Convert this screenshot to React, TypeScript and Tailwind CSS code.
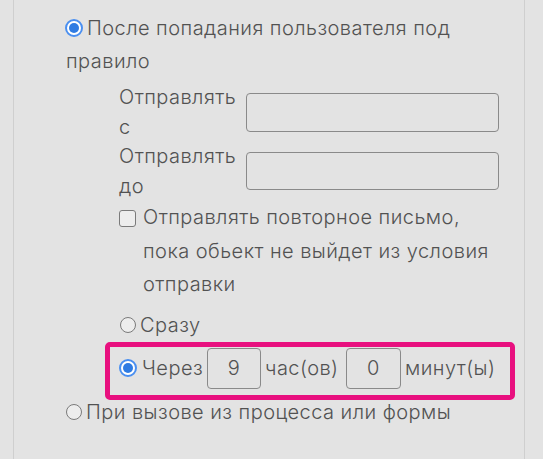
import React from "react";

function RadioOn() {
  return (
    <span className="inline-flex shrink-0 items-center justify-center w-[18px] h-[18px] rounded-full border-[2px] border-[#4a8ff0] bg-white">
      <span className="block w-[10px] h-[10px] rounded-full bg-[#2f7be2]" />
    </span>
  );
}

function RadioOff() {
  return (
    <span className="inline-block shrink-0 w-[16px] h-[16px] rounded-full border border-[#7a7a7a] bg-[#ededed]" />
  );
}

export default function App() {
  return (
    <div className="w-[543px] h-[459px] overflow-hidden bg-[#e3e3e3] font-['Inter',sans-serif] font-light tracking-[0.45px] text-[20px] text-[#525252]">
      <div className="ml-[13px] w-[512px] h-full border-x border-[#cfcfcf] pl-[52px] pt-[10px]">
        <div className="w-[445px] leading-[33px]">
          <span className="inline-block align-[2px] mr-[4px] -ml-[1px]">
            <RadioOn />
          </span>
          После попадания пользователя под правило
        </div>

        <div className="ml-[53px] mt-[4px] w-[380px]">
          <div className="flex items-center h-[60px]">
            <div className="w-[127px] leading-[30px]">
              Отправлять
              <br />с
            </div>
            <div className="flex-1 h-[39px] rounded-[4px] border border-[#8a8a8a]" />
          </div>
          <div className="flex items-center h-[60px] -mt-[1px]">
            <div className="w-[127px] leading-[30px]">
              Отправлять
              <br />
              до
            </div>
            <div className="flex-1 h-[38px] rounded-[4px] border border-[#8a8a8a]" />
          </div>

          <div className="flex items-start">
            <span className="mt-[9px] shrink-0 w-[17px] h-[17px] rounded-[3px] border border-[#7a7a7a] bg-[#ededed]" />
            <div className="ml-[7px] leading-[33.5px]">
              Отправлять повторное письмо, пока обьект не выйдет из условия отправки
            </div>
          </div>

          <div className="flex items-center h-[33px] mt-[7px]">
            <span className="ml-[1px] flex">
              <RadioOff />
            </span>
            <span className="ml-[4px]">Сразу</span>
          </div>

          <div className="-ml-[14px] w-[410px] h-[58px] border-[5px] border-[#e8107f] rounded-[5px] flex items-center pl-[9px] pb-[5px]">
            <RadioOn />
            <span className="ml-[5px] w-[65px] shrink-0">Через</span>
            <div className="w-[54px] h-[41px] shrink-0 rounded-[4px] border border-[#8a8a8a] flex items-center justify-center">
              9
            </div>
            <span className="ml-[4px] w-[81px] shrink-0">час(ов)</span>
            <div className="w-[55px] h-[41px] shrink-0 rounded-[4px] border border-[#8a8a8a] flex items-center justify-center">
              0
            </div>
            <span className="ml-[4px] whitespace-nowrap">минут(ы)</span>
          </div>
        </div>

        <div className="flex items-center h-[24px]">
          <RadioOff />
          <span className="ml-[4px]">При вызове из процесса или формы</span>
        </div>
      </div>
    </div>
  );
}
